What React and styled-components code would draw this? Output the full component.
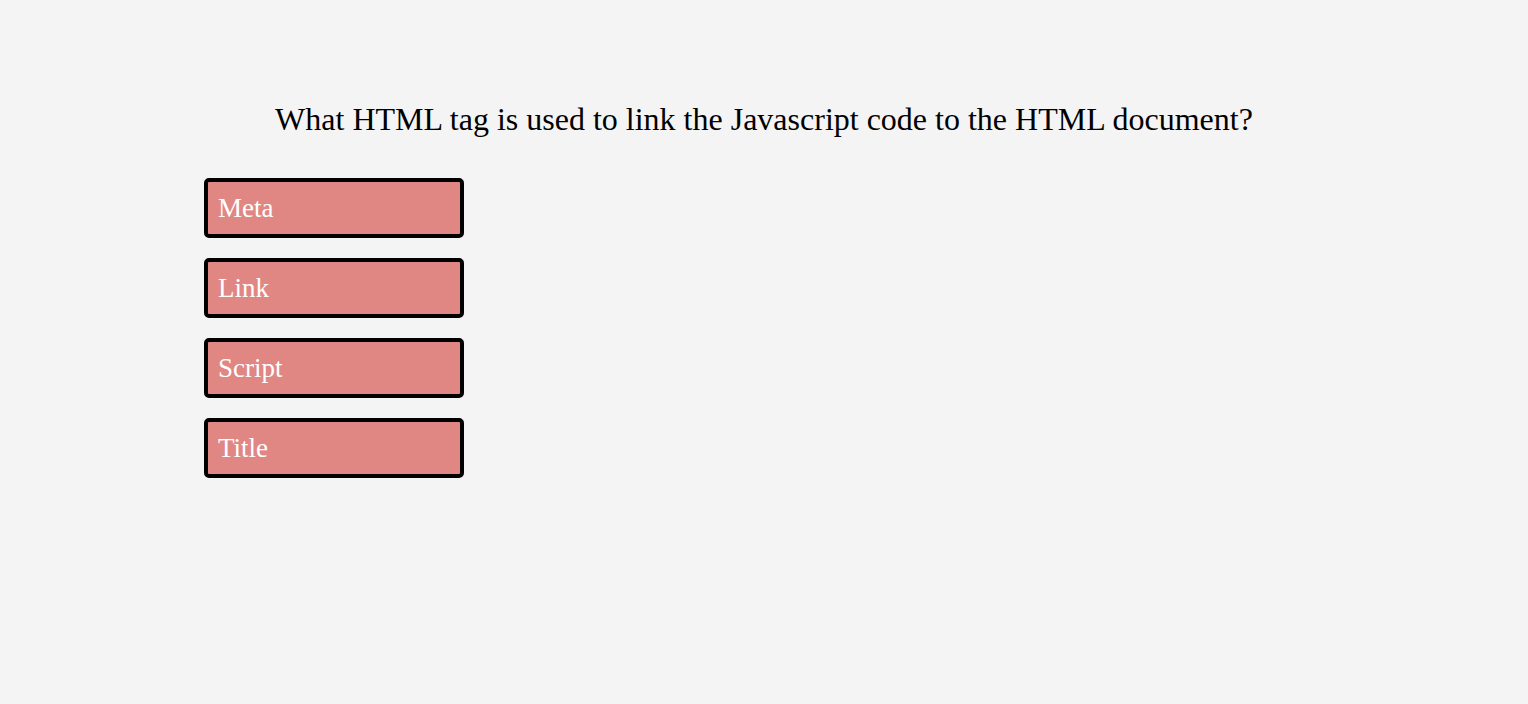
import React from "react";
import styled, { createGlobalStyle } from "styled-components";

const GlobalStyle = createGlobalStyle`
  body {
    margin: 0;
    background-color: #f4f4f4;
    font-family: "Liberation Serif", "Times New Roman", serif;
  }
`;

const QuizContainer = styled.div`
  width: 1120px;
  margin: 0 auto;
  padding-top: 101px;
`;

const Question = styled.h2`
  margin: 0 0 40px;
  font-size: 32px;
  font-weight: normal;
  text-align: center;
  color: #000;
`;

const AnswerList = styled.div`
  display: flex;
  flex-direction: column;
  gap: 20px;
`;

const AnswerButton = styled.div`
  box-sizing: border-box;
  display: flex;
  align-items: center;
  width: 260px;
  height: 60px;
  padding: 0 10px;
  background-color: #e08683;
  border: 4px solid #000;
  border-radius: 5px;
  color: #fff;
  font-size: 27px;
  cursor: pointer;
`;

const answers = ["Meta", "Link", "Script", "Title"];

const App = () => {
  return (
    <>
      <GlobalStyle />
      <QuizContainer>
        <Question>
          What HTML tag is used to link the Javascript code to the HTML document?
        </Question>
        <AnswerList>
          {answers.map((answer) => (
            <AnswerButton key={answer}>{answer}</AnswerButton>
          ))}
        </AnswerList>
      </QuizContainer>
    </>
  );
};

export default App;
